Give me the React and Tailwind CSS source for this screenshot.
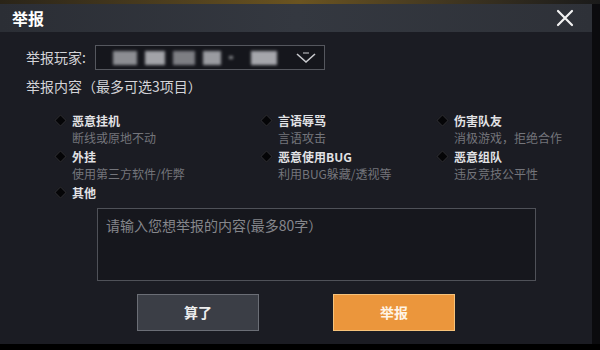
import React from "react";

const options = [
  { title: "恶意挂机", desc: "断线或原地不动" },
  { title: "言语辱骂", desc: "言语攻击" },
  { title: "伤害队友", desc: "消极游戏，拒绝合作" },
  { title: "外挂", desc: "使用第三方软件/作弊" },
  { title: "恶意使用BUG", desc: "利用BUG躲藏/透视等" },
  { title: "恶意组队", desc: "违反竞技公平性" },
  { title: "其他", desc: "" },
];

function Diamond() {
  return (
    <span className="mt-[4px] block h-[9px] w-[9px] shrink-0 rotate-45 border border-[#2c2c31] bg-[#050507]" />
  );
}

function Option({ title, desc }) {
  return (
    <div className="flex items-start gap-[7px]">
      <Diamond />
      <div className="flex flex-col">
        <span className="text-[12px] leading-[17px] font-bold text-[#e2e2e5]">
          {title}
        </span>
        {desc && (
          <span className="text-[12px] leading-[17px] text-[#74757b]">
            {desc}
          </span>
        )}
      </div>
    </div>
  );
}

export default function App() {
  return (
    <div
      className="h-[350px] w-[600px] overflow-hidden bg-black"
      style={{ fontFamily: '"Noto Sans CJK SC", "Noto Sans", sans-serif' }}
    >
      <div className="h-[4px] bg-gradient-to-r from-[#2a2418] via-[#6b5420] to-[#1a1a1a]" />
      <div className="flex">
        <div className="w-[592px]">
          {/* header */}
          <div className="flex h-[28px] items-center justify-between bg-gradient-to-r from-[#2b2e35] via-[#343840] to-[#2e3138] pl-[12px] pr-[18px]">
            <span className="text-[16px] font-bold text-white">举报</span>
            <svg width="18" height="18" viewBox="0 0 18 18" fill="none">
              <path
                d="M2 2L16 16M16 2L2 16"
                stroke="#f2f2f2"
                strokeWidth="2.2"
                strokeLinecap="round"
              />
            </svg>
          </div>

          {/* body */}
          <div className="h-[312px] bg-[#1b1c23] pl-[26px]">
            <div className="flex items-center pt-[13px]">
              <span className="w-[69px] text-[14px] text-[#d4d4d8]">
                举报玩家:
              </span>
              <div className="flex h-[25px] w-[230px] items-center justify-between border border-[#55575e] bg-[#15161c] pl-[17px] pr-[7px]">
                <div className="flex items-center gap-[8px] blur-[1.5px]">
                  <span className="block h-[14px] w-[24px] bg-[#8c8d92]" />
                  <span className="block h-[14px] w-[20px] bg-[#a2a3a8]" />
                  <span className="block h-[14px] w-[22px] bg-[#7d7e83]" />
                  <span className="block h-[14px] w-[18px] bg-[#9a9ba0]" />
                  <span className="block h-[3px] w-[4px] bg-[#8a8b90]" />
                  <span className="ml-[10px] block h-[14px] w-[26px] bg-[#a5a6ab]" />
                </div>
                <svg width="22" height="14" viewBox="0 0 22 14" fill="none">
                  <path
                    d="M2 3L11 11L20 3"
                    stroke="#c9cace"
                    strokeWidth="1.6"
                  />
                  <path d="M8 2H14" stroke="#9a9ba0" strokeWidth="1.4" />
                </svg>
              </div>
            </div>

            <div className="mt-[7px] text-[14px] leading-[18px] text-[#d4d4d8]">
              举报内容（最多可选3项目）
            </div>

            <div className="mt-[17px] ml-[30px] grid grid-cols-[206px_176px_1fr] gap-y-[2px]">
              {options.map((o) => (
                <Option key={o.title} title={o.title} desc={o.desc} />
              ))}
            </div>

            <div className="mt-[7px] ml-[71px] h-[73px] w-[439px] border border-[#4f5158] bg-[#16171d] px-[8px] pt-[6px] text-[14px] leading-[20px] text-[#85868b]">
              请输入您想举报的内容(最多80字）
            </div>

            <div className="mt-[13px] ml-[111px] flex gap-[74px]">
              <button className="h-[37px] w-[122px] border border-[#6b6e76] bg-[#3b3e46] text-[14px] font-bold text-[#eeeeee]">
                算了
              </button>
              <button className="h-[37px] w-[122px] border border-[#f6c27a] bg-[#eb963c] text-[14px] font-bold text-[#fff4e6]">
                举报
              </button>
            </div>
          </div>
        </div>
        <div className="h-[340px] flex-1 bg-[#0b0b0e]" />
      </div>
    </div>
  );
}
